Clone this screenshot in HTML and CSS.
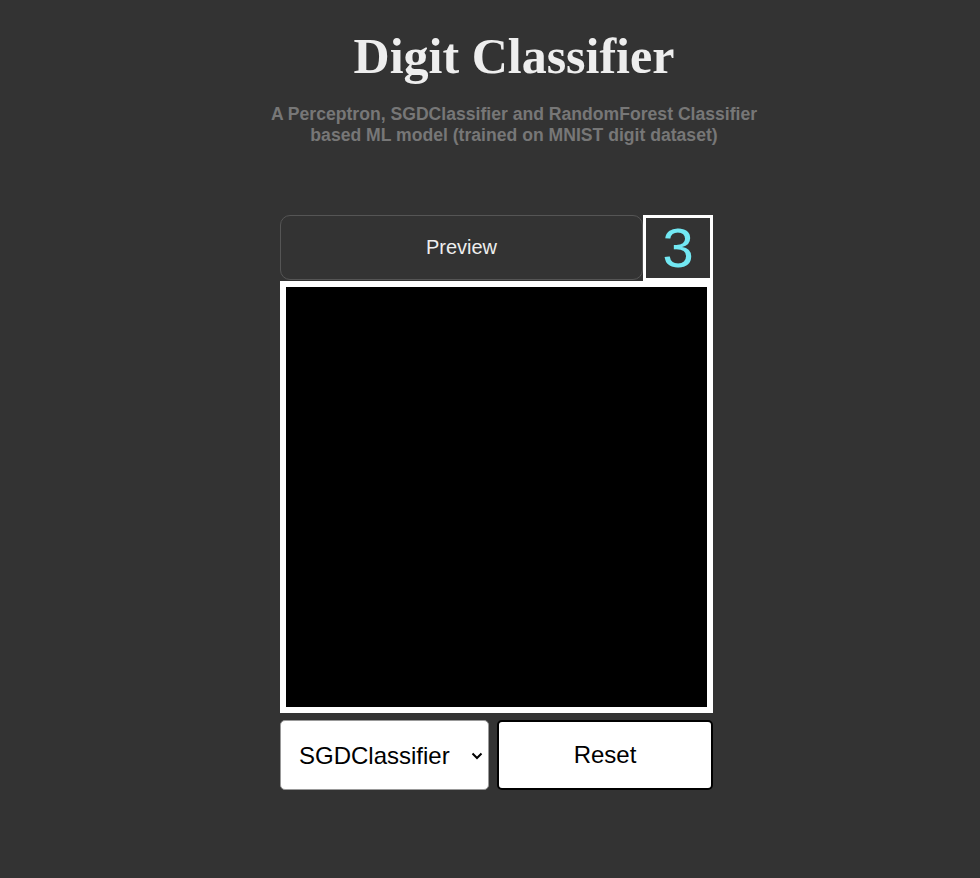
FILE: index.html
```html
<!DOCTYPE html>
<html lang="en">
<head>
<meta charset="utf-8">
<title>Digit Classifier</title>
<link rel="stylesheet" href="styles.css">
</head>
<body>
<div class="page">
  <h1 class="title">Digit Classifier</h1>
  <p class="subtitle">A Perceptron, SGDClassifier and RandomForest Classifier<br>based ML model (trained on MNIST digit dataset)</p>
  <div class="board">
    <div class="stack">
      <div class="top-row">
        <button class="preview">Preview</button>
        <div class="digit">3</div>
      </div>
      <canvas class="pad" width="420" height="420"></canvas>
      <div class="bottom-row">
        <div class="select-wrap">
          <select class="model">
            <option>SGDClassifier</option>
            <option>Perceptron</option>
            <option>RandomForest</option>
          </select>
          <svg class="chev" width="12" height="8" viewBox="0 0 12 8"><path d="M1.5 1.5 L6 6 L10.5 1.5" fill="none" stroke="#000" stroke-width="2"/></svg>
        </div>
        <button class="reset">Reset</button>
      </div>
    </div>
  </div>
</div>
</body>
</html>
```

FILE: styles.css
```css
html, body {
  margin: 0;
  padding: 0;
  background: #333333;
  height: 100%;
}
body {
  font-family: "Liberation Sans", Arial, sans-serif;
}
.page {
  padding-left: 48px;
  text-align: center;
}
.title {
  margin: 26px 0 0;
  font-family: "Liberation Serif", "Times New Roman", serif;
  font-weight: bold;
  font-size: 50px;
  line-height: 60px;
  color: #eeeeee;
}
.subtitle {
  margin: 18px 0 0;
  font-weight: bold;
  font-size: 17.6px;
  line-height: 21px;
  color: #777777;
}
.board {
  width: 468px;
  margin: 69px auto 0;
  text-align: left;
}
.stack {
  width: 433px;
}
.top-row {
  display: flex;
  height: 66px;
}
.preview {
  flex: 1;
  height: 65px;
  margin: 0;
  background: transparent;
  border: 1px solid #555555;
  border-radius: 10px;
  color: #eeeeee;
  font-family: "Liberation Sans", Arial, sans-serif;
  font-size: 20px;
  padding: 0;
}
.digit {
  box-sizing: border-box;
  width: 70px;
  height: 66px;
  border: 3px solid #ffffff;
  color: #72e8f3;
  font-size: 56px;
  line-height: 60px;
  text-align: center;
}
.pad {
  display: block;
  width: 421px;
  height: 420px;
  border: 6px solid #ffffff;
  background: #000000;
}
.bottom-row {
  display: flex;
  gap: 8px;
  margin-top: 7px;
}
.select-wrap {
  position: relative;
  width: 209px;
  height: 70px;
}
.model {
  appearance: none;
  -webkit-appearance: none;
  box-sizing: border-box;
  width: 100%;
  height: 100%;
  margin: 0;
  padding: 0 0 0 18px;
  background: #ffffff;
  border: 1px solid #999999;
  border-radius: 5px;
  color: #000000;
  font-family: "Liberation Sans", Arial, sans-serif;
  font-size: 24px;
  outline: none;
}
.chev {
  position: absolute;
  left: 191px;
  top: 32px;
  pointer-events: none;
}
.reset {
  box-sizing: border-box;
  width: 216px;
  height: 70px;
  margin: 0;
  padding: 0;
  background: #ffffff;
  border: 2px solid #000000;
  border-radius: 5px;
  color: #000000;
  font-family: "Liberation Sans", Arial, sans-serif;
  font-size: 24px;
}
```
